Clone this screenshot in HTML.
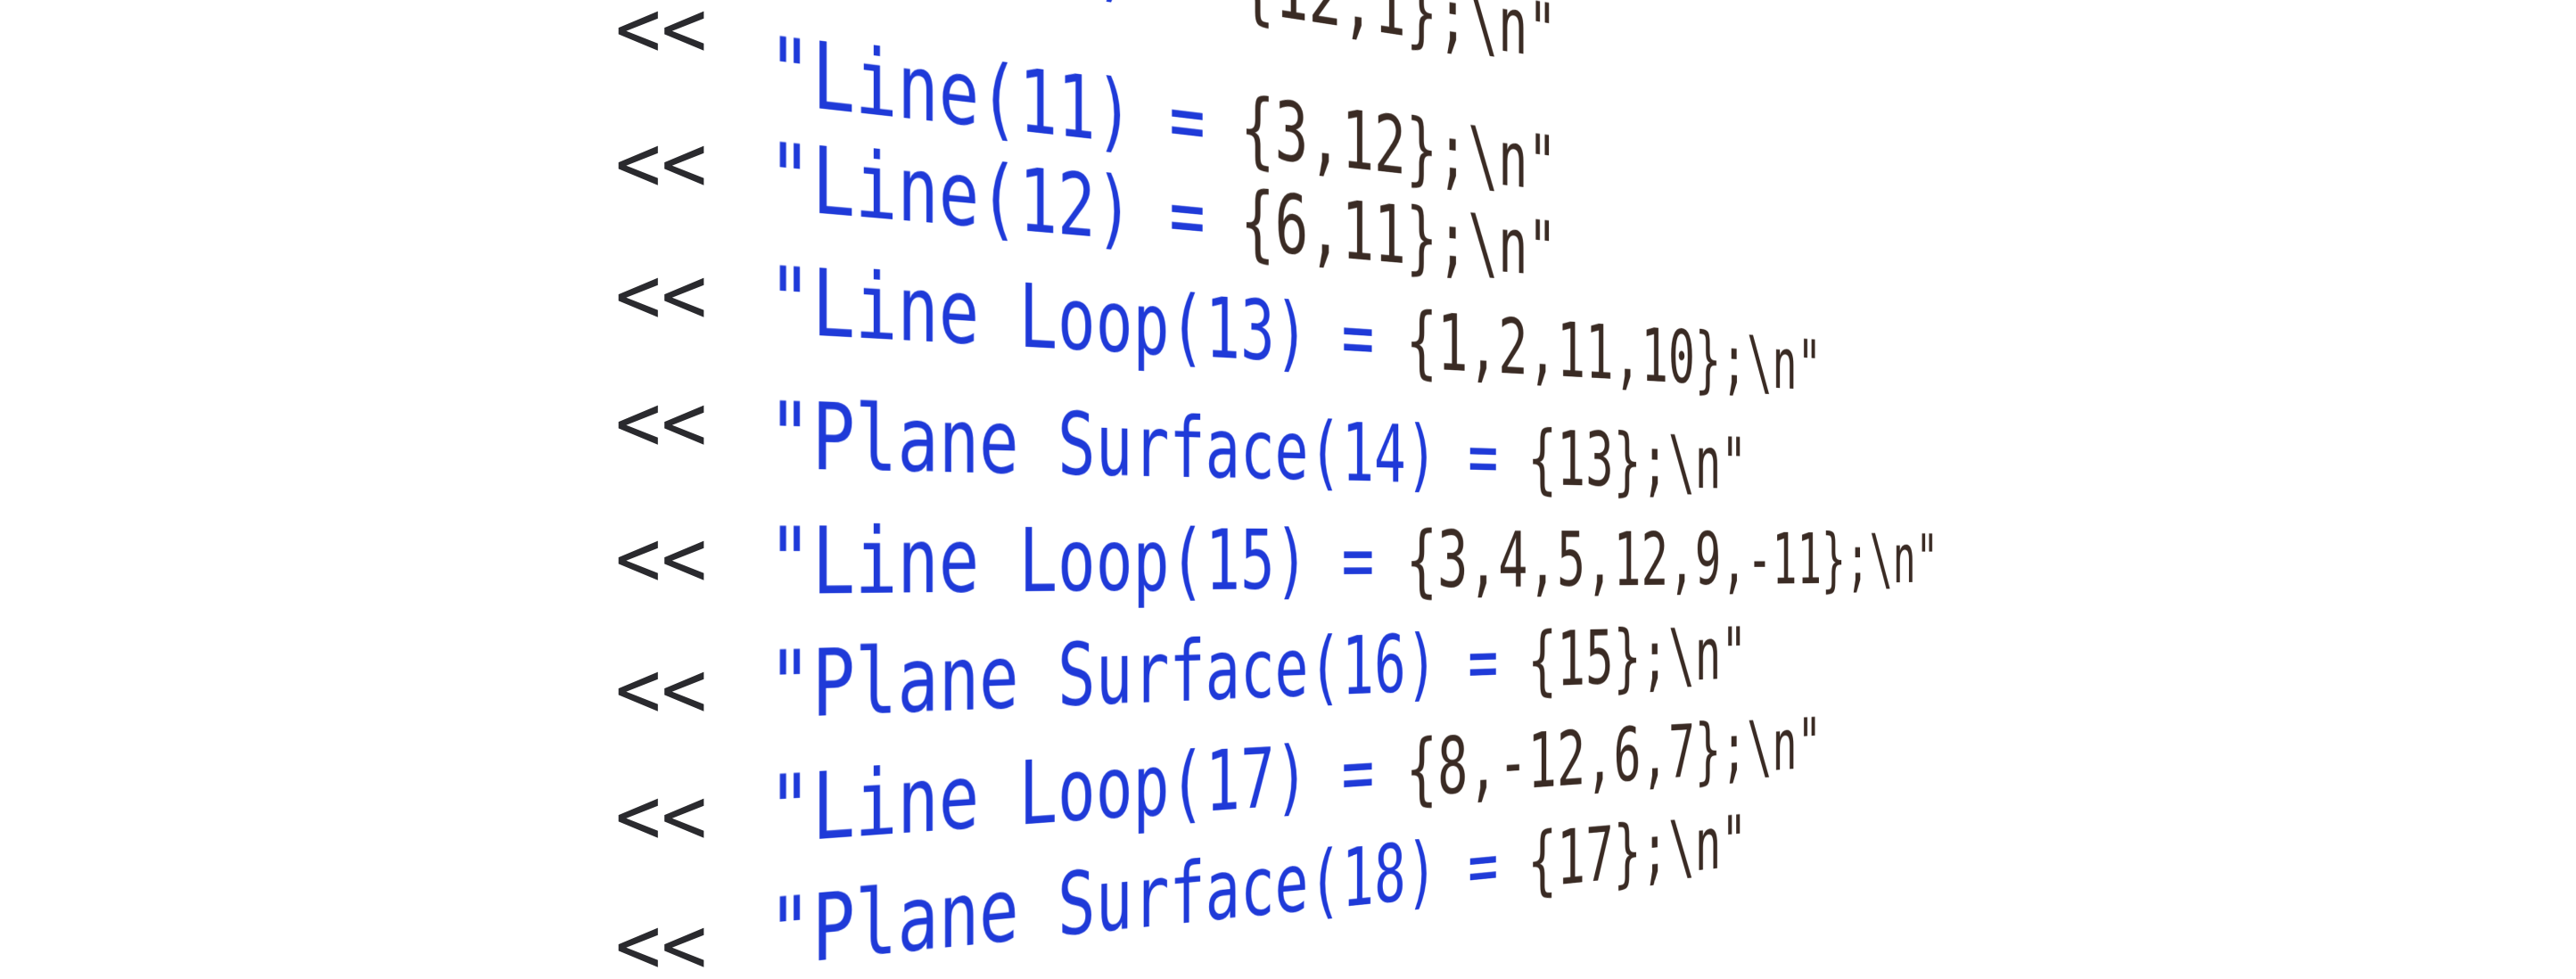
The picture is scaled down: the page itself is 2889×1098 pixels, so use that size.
<!DOCTYPE html>
<html><head><meta charset="utf-8"><style>
html,body{margin:0;padding:0;background:#fff;width:2889px;height:1098px;overflow:hidden;}
#wrap{position:absolute;left:0;top:0;width:2889px;height:1098px;overflow:hidden;}
#plane{position:absolute;left:0;top:0;width:2889px;height:1098px;transform-origin:861px 620px;transform:perspective(2300px) rotateY(27deg);}
.l{position:absolute;left:861px;white-space:pre;font-family:"DejaVu Sans Mono","Liberation Mono",monospace;font-size:106px;line-height:90px;height:90px;color:#1f3ad8;transform:scaleX(0.88);transform-origin:0 50%;}
.o{position:absolute;left:690px;font-family:"DejaVu Sans Mono","Liberation Mono",monospace;font-size:90px;line-height:70px;height:70px;color:#2a2a2e;white-space:pre;transform:scaleX(0.95);transform-origin:0 50%;}
.d{color:#3a2b24;}
</style></head><body>
<div id="wrap">
<div class="o" style="top:-2px">&lt;&lt;</div>
<div class="o" style="top:149px">&lt;&lt;</div>
<div class="o" style="top:297px">&lt;&lt;</div>
<div class="o" style="top:440px">&lt;&lt;</div>
<div class="o" style="top:592px">&lt;&lt;</div>
<div class="o" style="top:739px">&lt;&lt;</div>
<div class="o" style="top:881px">&lt;&lt;</div>
<div class="o" style="top:1026px">&lt;&lt;</div>
<div id="plane">
<div class="l" style="top:-150px">"Line(10) = <span class="d">{12,1};\n"</span></div>
<div class="l" style="top:34px">"Line(11) = <span class="d">{3,12};\n"</span></div>
<div class="l" style="top:153px">"Line(12) = <span class="d">{6,11};\n"</span></div>
<div class="l" style="top:292px">"Line Loop(13) = <span class="d">{1,2,11,10};\n"</span></div>
<div class="l" style="top:444px">"Plane Surface(14) = <span class="d">{13};\n"</span></div>
<div class="l" style="top:585px">"Line Loop(15) = <span class="d">{3,4,5,12,9,-11};\n"</span></div>
<div class="l" style="top:724px">"Plane Surface(16) = <span class="d">{15};\n"</span></div>
<div class="l" style="top:864px">"Line Loop(17) = <span class="d">{8,-12,6,7};\n"</span></div>
<div class="l" style="top:1002px">"Plane Surface(18) = <span class="d">{17};\n"</span></div>
</div>
</div>
</body></html>
